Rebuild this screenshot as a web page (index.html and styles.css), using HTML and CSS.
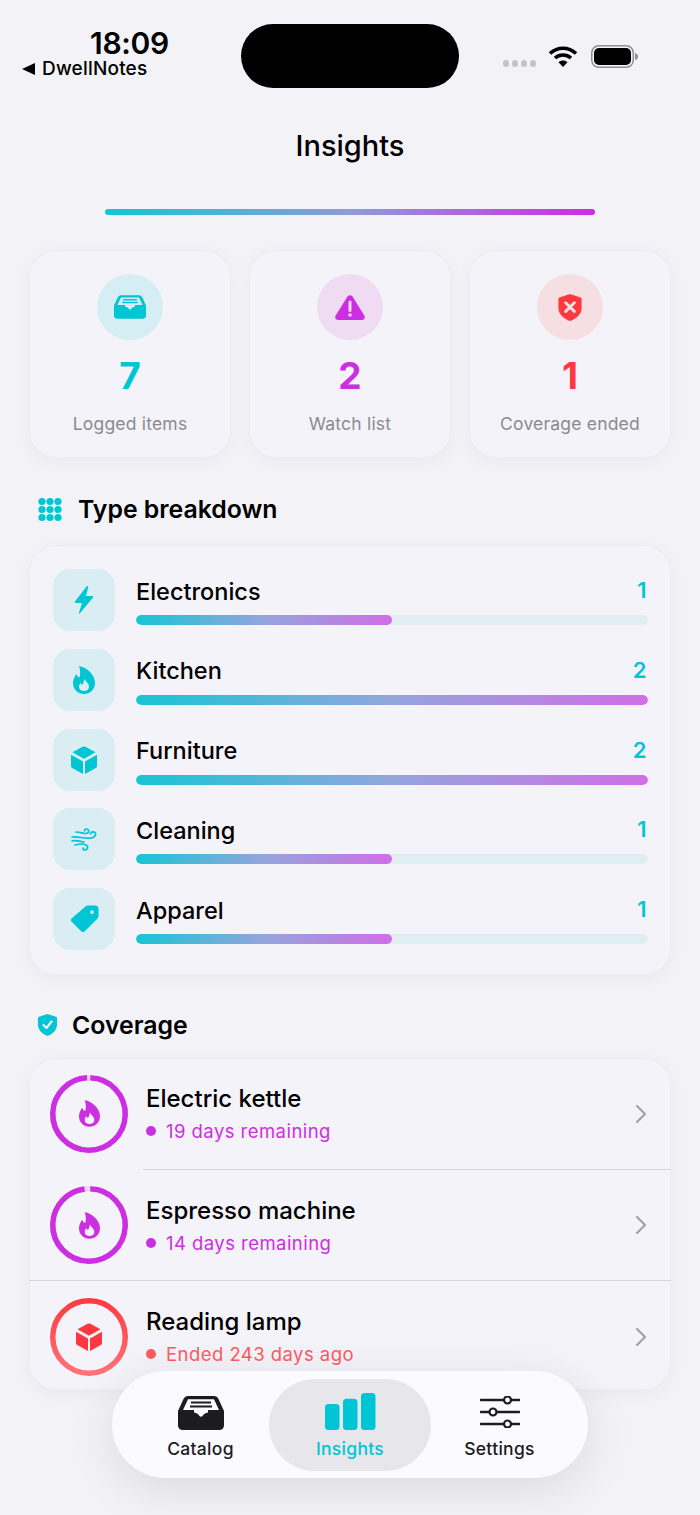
FILE: index.html
```html
<!DOCTYPE html>
<html lang="en">
<head>
<meta charset="utf-8">
<title>Insights</title>
<link rel="stylesheet" href="styles.css">
</head>
<body>
<svg class="defs" width="0" height="0" aria-hidden="true">
  <defs>
    <symbol id="tray" viewBox="0 0 46 34">
      <path d="M10 0H36Q39 0 40.5 3L46 15V29Q46 34 41 34H5Q0 34 0 29V15L5.500 3Q7 0 10 0Z" fill="currentColor"/>
      <path class="hole" d="M10 3.200H36L41 14H30V16.500Q26 17 24.500 20Q23 21.500 21.500 20Q20 17 16 16.500V14H5Z"/>
      <path d="M13 6.500H33M12 10.500H34" stroke="currentColor" stroke-width="2" fill="none"/>
    </symbol>
    <symbol id="flame" viewBox="0 0 22 28">
      <path fill-rule="evenodd" fill="currentColor" d="M6 0C13 1 22 8 22 17C22 23.500 17 28 11 28C5 28 0 23.500 0 17C0 13 2 10 3.500 8C4 10 5 11 6.500 11.500C7.500 8 7.500 4 6 0ZM11.500 13C13 16 16 17.500 16 20.500C16 23.500 13.800 25 11 25C8.200 25 6 23.500 6 20.500C6 19 6.800 18 7.800 17C8.200 18 8.800 18.600 9.600 18.800C10.500 17 11 15 11.500 13Z"/>
    </symbol>
    <symbol id="cube" viewBox="0 0 26 28">
      <path fill="currentColor" d="M11.500 .8Q13 0 14.500 .8L24.500 6.200L13 12.800L1.500 6.200ZM0 8.700L12 15.400V28L1.200 22Q0 21.300 0 20ZM26 8.700L14 15.400V28L24.800 22Q26 21.300 26 20Z"/>
    </symbol>
  </defs>
</svg>
<div class="phone">
  <header class="status">
    <div class="status-left">
      <span class="time">18:09</span>
      <span class="back"><i class="back-arrow"></i>DwellNotes</span>
    </div>
    <div class="island"></div>
    <div class="status-right">
      <span class="signal"><i></i><i></i><i></i><i></i></span>
      <svg class="wifi" viewBox="0 0 30 22"><path d="M2 8.500C9.500 1.500 20.500 1.500 28 8.500M7 13C11.500 9 18.500 9 23 13" fill="none" stroke="currentColor" stroke-width="3.600"/><path d="M15 22L10.500 17.200C13 15 17 15 19.500 17.200Z" fill="currentColor"/></svg>
      <svg class="battery" viewBox="0 0 47 23"><rect x=".75" y=".75" width="41.500" height="21.500" rx="7" fill="none" stroke="#8e8e93" stroke-width="1.500"/><rect x="3" y="3" width="37" height="17" rx="5" fill="currentColor"/><path d="M44 8Q47 9 47 11.500Q47 14 44 15Z" fill="#8e8e93"/></svg>
    </div>
  </header>

  <h1 class="title">Insights</h1>
  <div class="rule"></div>

  <section class="stats">
    <div class="stat stat-cyan">
      <div class="stat-icon"><svg class="ic-tray"><use href="#tray"/></svg></div>
      <div class="stat-num">7</div>
      <div class="stat-label">Logged items</div>
    </div>
    <div class="stat stat-purple">
      <div class="stat-icon"><svg class="ic-warn" viewBox="0 0 30 25"><path fill="currentColor" d="M12.500 1.500Q15 -1 17.500 1.500L29.300 20.500Q31 24.500 27 25H3Q-1 24.500 .7 20.500Z"/><path d="M15 7V15.500" stroke="#efdcf3" stroke-width="3" stroke-linecap="round"/><circle cx="15" cy="20" r="1.800" fill="#efdcf3"/></svg></div>
      <div class="stat-num">2</div>
      <div class="stat-label">Watch list</div>
    </div>
    <div class="stat stat-red">
      <div class="stat-icon"><svg class="ic-shield" viewBox="0 0 24 28"><path fill="currentColor" d="M12 0L23 3.500Q24 4 24 5V15C24 21 18 26 12 28C6 26 0 21 0 15V5Q0 4 1 3.500Z"/><path d="M7.500 9L16.500 18M16.500 9L7.500 18" stroke="#f6dfe2" stroke-width="3" stroke-linecap="round"/></svg></div>
      <div class="stat-num">1</div>
      <div class="stat-label">Coverage ended</div>
    </div>
  </section>

  <h2 class="heading heading-types">
    <svg class="ic-dots" viewBox="0 0 24 23"><g fill="currentColor"><ellipse cx="4" cy="3.500" rx="3.600" ry="3.500"/><ellipse cx="12" cy="3.500" rx="3.600" ry="3.500"/><ellipse cx="20" cy="3.500" rx="3.600" ry="3.500"/><ellipse cx="4" cy="11.500" rx="3.600" ry="3.500"/><ellipse cx="12" cy="11.500" rx="3.600" ry="3.500"/><ellipse cx="20" cy="11.500" rx="3.600" ry="3.500"/><ellipse cx="4" cy="19.500" rx="3.600" ry="3.500"/><ellipse cx="12" cy="19.500" rx="3.600" ry="3.500"/><ellipse cx="20" cy="19.500" rx="3.600" ry="3.500"/></g></svg>
    Type breakdown
  </h2>

  <section class="card types">
    <div class="type">
      <div class="type-icon"><svg class="ic-bolt" viewBox="0 0 20 28"><path fill="currentColor" d="M12.500 .5L1 15.500Q.3 17 2 17H8L5 26.800Q4.800 28.500 6.200 27L19 11.500Q19.800 10 18 10H12L14.200 1.200Q14 -.6 12.500 .5Z"/></svg></div>
      <div class="type-body">
        <div class="type-head"><span>Electronics</span><b>1</b></div>
        <div class="track"><div class="fill" style="width:50%"></div></div>
      </div>
    </div>
    <div class="type">
      <div class="type-icon"><svg class="ic-flame"><use href="#flame"/></svg></div>
      <div class="type-body">
        <div class="type-head"><span>Kitchen</span><b>2</b></div>
        <div class="track"><div class="fill" style="width:100%"></div></div>
      </div>
    </div>
    <div class="type">
      <div class="type-icon"><svg class="ic-cube"><use href="#cube"/></svg></div>
      <div class="type-body">
        <div class="type-head"><span>Furniture</span><b>2</b></div>
        <div class="track"><div class="fill" style="width:100%"></div></div>
      </div>
    </div>
    <div class="type">
      <div class="type-icon"><svg class="ic-wind" viewBox="0 0 26 23"><g fill="none" stroke="currentColor" stroke-width="1.700" stroke-linecap="round"><path d="M5 4C9 4 12 5.500 15 5.500C18.500 5.500 18.500 1 15.500 1C14.200 1 13.500 2 13.500 2.800"/><path d="M1 9C7 8 13 11 20 10C25.500 9.300 26 3.800 22 3.800C20.500 3.800 19.500 4.800 19.500 6"/><path d="M1 13C6 12 9 13.500 13 14"/><path d="M4 17C8 16 12 15 15 17C18 19 16.500 22 14 22C12.500 22 12 21 12 20"/></g></svg></div>
      <div class="type-body">
        <div class="type-head"><span>Cleaning</span><b>1</b></div>
        <div class="track"><div class="fill" style="width:50%"></div></div>
      </div>
    </div>
    <div class="type">
      <div class="type-icon"><svg class="ic-tag" viewBox="0 0 29 28"><path fill="currentColor" fill-rule="evenodd" d="M15.500 1.500Q16.500 .5 18 .5H25Q28.500 .5 28.500 4V11Q28.500 12.500 27.500 13.500L14.500 26.500Q13 28 11.500 26.500L1.500 16.500Q0 15 1.500 13.500ZM22 5.200A1.900 1.900 0 1 0 22 9A1.900 1.900 0 1 0 22 5.200Z"/></svg></div>
      <div class="type-body">
        <div class="type-head"><span>Apparel</span><b>1</b></div>
        <div class="track"><div class="fill" style="width:50%"></div></div>
      </div>
    </div>
  </section>

  <h2 class="heading heading-coverage">
    <svg class="ic-check" viewBox="0 0 19 22"><path fill="currentColor" d="M9.500 0L18 2.800Q19 3.200 19 4.200V11C19 16 14.500 20 9.500 22C4.500 20 0 16 0 11V4.200Q0 3.200 1 2.800Z"/><path d="M5.500 11L8.500 14L13.500 7.500" fill="none" stroke="#f2f2f7" stroke-width="2.200" stroke-linecap="round" stroke-linejoin="round"/></svg>
    Coverage
  </h2>

  <section class="card coverage">
    <div class="item item-purple item-inset">
      <div class="ring">
        <svg class="ring-svg" viewBox="0 0 78 78"><circle cx="39" cy="39" r="36.250" class="ring-bg"/><circle cx="39" cy="39" r="36.250" class="ring-fg" pathLength="100" stroke-dasharray="98.600 1.400"/></svg>
        <svg class="ic-flame ring-icon"><use href="#flame"/></svg>
      </div>
      <div class="item-text">
        <div class="item-name">Electric kettle</div>
        <div class="item-sub"><i class="dot"></i>19 days remaining</div>
      </div>
      <svg class="chev" viewBox="0 0 12 20"><path d="M2 2L10 10L2 18" fill="none" stroke="currentColor" stroke-width="2.200" stroke-linecap="round" stroke-linejoin="round"/></svg>
    </div>
    <div class="item item-purple item-full">
      <div class="ring">
        <svg class="ring-svg" viewBox="0 0 78 78"><circle cx="39" cy="39" r="36.250" class="ring-bg"/><circle cx="39" cy="39" r="36.250" class="ring-fg" pathLength="100" stroke-dasharray="97.500 2.500"/></svg>
        <svg class="ic-flame ring-icon"><use href="#flame"/></svg>
      </div>
      <div class="item-text">
        <div class="item-name">Espresso machine</div>
        <div class="item-sub"><i class="dot"></i>14 days remaining</div>
      </div>
      <svg class="chev" viewBox="0 0 12 20"><path d="M2 2L10 10L2 18" fill="none" stroke="currentColor" stroke-width="2.200" stroke-linecap="round" stroke-linejoin="round"/></svg>
    </div>
    <div class="item item-red">
      <div class="ring">
        <svg class="ring-svg" viewBox="0 0 78 78"><defs><linearGradient id="redring" x1="0" y1="0" x2="0" y2="1"><stop offset="0" stop-color="#ff3b41"/><stop offset="1" stop-color="#ff7379"/></linearGradient></defs><circle cx="39" cy="39" r="36.250" class="ring-red"/></svg>
        <svg class="ic-cube ring-icon ring-cube"><use href="#cube"/></svg>
      </div>
      <div class="item-text">
        <div class="item-name">Reading lamp</div>
        <div class="item-sub"><i class="dot"></i>Ended 243 days ago</div>
      </div>
      <svg class="chev" viewBox="0 0 12 20"><path d="M2 2L10 10L2 18" fill="none" stroke="currentColor" stroke-width="2.200" stroke-linecap="round" stroke-linejoin="round"/></svg>
    </div>
  </section>

  <nav class="tabs">
    <div class="tab tab-first">
      <svg class="ic-nav-tray"><use href="#tray"/></svg>
      <span>Catalog</span>
    </div>
    <div class="tab tab-active">
      <svg class="ic-nav-bars" viewBox="0 0 51 37"><g fill="currentColor"><rect x="0" y="11" width="14.500" height="26" rx="3.500"/><rect x="18" y="5.700" width="14.500" height="31.300" rx="3.500"/><rect x="36" y="0" width="14.500" height="37" rx="3.500"/></g></svg>
      <span>Insights</span>
    </div>
    <div class="tab tab-last">
      <svg class="ic-nav-sliders" viewBox="0 0 40 32"><g stroke="currentColor" stroke-width="2.600" stroke-linecap="round"><path d="M1 4H39M1 16H39M1 28H39"/><g fill="#fbfaff" stroke-width="2.200"><circle cx="27.500" cy="4" r="3.500"/><circle cx="13" cy="16" r="3.500"/><circle cx="27.500" cy="28" r="3.500"/></g></g></svg>
      <span>Settings</span>
    </div>
  </nav>
</div>
</body>
</html>
```
FILE: styles.css
```css
* { box-sizing: border-box; }
html, body { margin: 0; padding: 0; }
body { background: #f2f2f7; color: #000; font-family: Inter, "Liberation Sans", sans-serif; }
.defs { position: absolute; }
.hole { fill: var(--hole, #fbfaff); }

.phone { position: relative; width: 700px; height: 1515px; overflow: hidden; padding: 24px 29px 0; }

.status { display: flex; margin: 0 -29px; height: 64px; }
.status-left { width: 241px; display: flex; flex-direction: column; padding-left: 22px; }
.time { font-size: 30px; font-weight: 600; line-height: 38px; margin-left: 68px; letter-spacing: -.3px; }
.back { display: flex; align-items: center; font-size: 19px; font-weight: 450; line-height: 24px; margin-top: -5px; letter-spacing: .2px; }
.back-arrow { width: 0; height: 0; border-style: solid; border-width: 6px 13px 6px 0; border-color: transparent #000 transparent transparent; margin-right: 7px; }
.island { width: 218px; height: 64px; background: #000; border-radius: 32px; }
.status-right { flex: 1; display: flex; align-items: flex-start; padding: 21px 0 0 44px; }
.signal { display: flex; gap: 3px; margin-top: 15px; }
.signal i { width: 6px; height: 7px; border-radius: 50%; background: #c4c4c8; }
.wifi { width: 30px; height: 22px; margin-left: 12px; color: #000; }
.battery { width: 47px; height: 23px; margin-left: 13px; color: #000; }

.title { margin: 38px 0 0; text-align: center; font-size: 29px; line-height: 40px; font-weight: 500; }
.rule { width: 490px; height: 6px; margin: 43px auto 0; border-radius: 3px; background: linear-gradient(90deg, #12c6d6, #8f9bd9 50%, #cf2be2); }

.stats { display: flex; gap: 18px; margin-top: 35px; }
.stat { flex: 1; height: 208px; border-radius: 27px; background: #f4f3f9; box-shadow: inset 0 0 0 1px rgba(0,0,0,.03), 0 4px 18px rgba(0,0,0,.04); display: flex; flex-direction: column; align-items: center; padding-top: 24px; }
.stat-icon { width: 66px; height: 66px; border-radius: 50%; display: flex; align-items: center; justify-content: center; }
.stat-num { font-size: 37px; font-weight: 700; line-height: 46px; margin-top: 13px; }
.stat-label { font-size: 17.5px; line-height: 24px; color: #8a8a8f; margin-top: 13px; letter-spacing: .2px; }
.stat-cyan { color: #00c5d5; --hole: #d5eef3; }
.stat-cyan .stat-icon { background: #d5eef3; }
.stat-purple { color: #cc2ee2; }
.stat-purple .stat-icon { background: #efdcf3; }
.stat-red { color: #ff383f; }
.stat-red .stat-icon { background: #f6dfe2; }
.ic-tray { width: 32px; height: 24px; }
.ic-warn { width: 30px; height: 25px; }
.ic-shield { width: 24px; height: 27px; }

.heading { display: flex; align-items: center; margin: 0; font-size: 24.800px; line-height: 36px; font-weight: 600; }
.heading-types { margin-top: 33px; padding-left: 9px; gap: 16px; }
.heading-coverage { margin-top: 32px; padding-left: 9px; gap: 15px; }
.ic-dots { width: 24px; height: 23px; color: #00c5d5; }
.ic-check { width: 19px; height: 22px; color: #00c5d5; }

.card { border-radius: 27px; background: #f4f3f9; box-shadow: inset 0 0 0 1px rgba(0,0,0,.03), 0 4px 18px rgba(0,0,0,.04); }
.types { margin-top: 18px; height: 430px; padding: 24px 23px 0 24px; display: flex; flex-direction: column; gap: 17.75px; }
.type { display: flex; height: 62px; gap: 21px; }
.type-icon { width: 62px; height: 62px; flex: none; border-radius: 17px; background: #daedf3; color: #00c5d5; display: flex; align-items: center; justify-content: center; }
.type-body { flex: 1; }
.type-head { display: flex; justify-content: space-between; align-items: center; height: 30px; margin-top: 7px; font-size: 23.500px; font-weight: 450; }
.type-head b { font-size: 22px; font-weight: 600; line-height: 28px; color: #00c5d5; padding: 0 1.500px 2px 0; }
.track { height: 10px; margin-top: 9px; border-radius: 5px; background: #e0eef4; overflow: hidden; }
.fill { height: 100%; border-radius: 5px; background: linear-gradient(90deg, #17c5d5, #93a5dc 50%, #d06ee6); }
.ic-bolt { width: 20px; height: 28px; }
.ic-flame { width: 22px; height: 28px; }
.ic-cube { width: 26px; height: 28px; }
.ic-wind { width: 26px; height: 23px; }
.ic-tag { width: 29px; height: 28px; }

.coverage { margin-top: 15px; height: 332px; }
.item { position: relative; display: flex; align-items: center; height: 111.500px; padding: 0 24px 0 21px; }
.item-inset::after, .item-full::after { content: ""; position: absolute; right: 0; bottom: 0; height: 1px; background: #d6d6da; }
.item-inset::after { left: 114px; }
.item-full::after { left: 0; }
.item-purple { color: #cc2ee2; }
.item-red { color: #ff383f; }
.ring { position: relative; width: 78px; height: 78px; flex: none; display: flex; align-items: center; justify-content: center; }
.ring-svg { position: absolute; inset: 0; transform: rotate(-88deg); }
.ring-svg circle { fill: none; stroke-width: 5.500; }
.ring-bg { stroke: #efd6f5; }
.ring-fg { stroke: #cc2ee2; }
.ring-red { stroke: url(#redring); }
.item-red .ring-svg { transform: none; }
.ring-icon { position: relative; width: 21px; height: 27px; }
.ring-cube { width: 26px; height: 28px; }
.item-text { flex: 1; margin-left: 18px; padding-top: 1px; }
.item-name { font-size: 24px; font-weight: 500; line-height: 30px; color: #000; }
.item-sub { display: flex; align-items: center; font-size: 18.500px; line-height: 26px; margin-top: 4px; letter-spacing: .45px; }
.item-red .item-sub { color: #ff5a60; }
.dot { width: 10px; height: 10px; border-radius: 50%; background: currentColor; margin-right: 10px; }
.chev { width: 12px; height: 20px; color: #a2a2a7; }

.tabs { position: absolute; left: 112px; top: 1371px; width: 476px; height: 107px; padding: 8px; border-radius: 54px; background: #fbfaff; box-shadow: 0 10px 50px rgba(0,0,0,.1); display: flex; }
.tab { display: flex; flex-direction: column; align-items: center; justify-content: flex-end; height: 92px; padding-bottom: 10px; font-size: 17.500px; font-weight: 450; line-height: 24px; color: #1c1c1e; letter-spacing: .3px; }
.tab svg { margin-bottom: 7px; }
.tab-first { width: 149px; padding-left: 12px; }
.tab-last { width: 149px; padding-right: 12px; }
.tab-active { width: 162px; border-radius: 46px; background: #e7e6eb; color: #00c5d5; }
.ic-nav-tray { width: 46px; height: 34px; --hole: #fbfaff; }
.ic-nav-bars { width: 51px; height: 37px; }
.ic-nav-sliders { width: 40px; height: 32px; margin-bottom: 9px !important; }
```
